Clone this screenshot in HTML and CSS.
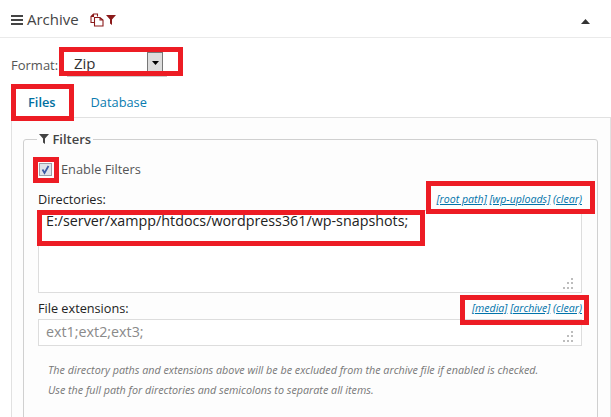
FILE: index.html
```html
<!DOCTYPE html>
<html lang="en">
<head>
<meta charset="utf-8">
<title>Archive</title>
<link rel="stylesheet" href="styles.css">
</head>
<body>
<div class="page">
  <header class="head">
    <svg class="burger" viewBox="0 0 12 10" width="12" height="10"><path d="M0 0h12v2H0zM0 4h12v2H0zM0 8h12v2H0z" fill="#444"/></svg>
    <span class="head-title">Archive</span>
    <svg class="copy-icon" viewBox="0 0 14 14" width="14" height="14"><path d="M5.500 1H3.500L1 3.500V9.500H4.500M5.500 1H7.500V3.500M3.500 1V3.500H1M4.500 4.500H10L13 7V13H4.500ZM10 4.500V7H13" fill="none" stroke="#8b1a1a" stroke-width="1.100"/></svg>
    <svg class="funnel-red" viewBox="0 0 10 10" width="10" height="10"><path d="M0 0h10L6 4.500V10L4 8.500V4.500z" fill="#8b1a1a"/></svg>
    <svg class="caret" viewBox="0 0 9 5" width="9" height="5"><path d="M4.500 0L9 5H0z" fill="#333"/></svg>
  </header>

  <div class="format-row">
    <label class="format-label">Format:</label>
    <div class="select">
      <span class="select-value">Zip</span>
      <span class="select-btn"><svg viewBox="0 0 7 4" width="7" height="4"><path d="M0 0h7L3.500 4z" fill="#000"/></svg></span>
    </div>
  </div>

  <nav class="tabs">
    <a class="tab tab-active">Files</a>
    <a class="tab">Database</a>
  </nav>

  <section class="panel">
    <fieldset class="filters">
      <legend class="legend">
        <svg viewBox="0 0 10 10" width="10" height="10"><path d="M0 0h10L6 4.500V10L4 8.500V4.500z" fill="#444"/></svg>
        Filters
      </legend>
      <div class="enable-row">
        <span class="checkbox"><svg viewBox="0 0 13 13" width="13" height="13"><path d="M3.500 6.500L5.500 10L9.500 3" fill="none" stroke="#3b5aa5" stroke-width="1.700"/></svg></span>
        <span class="enable-label">Enable Filters</span>
      </div>
      <div class="label-row label-row-dirs">
        <span class="field-label">Directories:</span>
        <span class="links"><a>[root path]</a> <a>[wp-uploads]</a> <a>(clear)</a></span>
      </div>
      <div class="field field-dirs">
        E:/server/xampp/htdocs/wordpress361/wp-snapshots;
        <svg class="grip" viewBox="0 0 12 12" width="12" height="12"><path d="M9 0h2v2H9zM5 4h2v2H5zM9 4h2v2H9zM1 9h2v2H1zM5 9h2v2H5zM9 9h2v2H9z" fill="#bdbdbd"/></svg>
      </div>
      <div class="label-row label-row-ext">
        <span class="field-label">File extensions:</span>
        <span class="links"><a>[media]</a> <a>[archive]</a> <a>(clear)</a></span>
      </div>
      <div class="field field-ext">
        ext1;ext2;ext3;
        <svg class="grip" viewBox="0 0 12 12" width="12" height="12"><path d="M9 0h2v2H9zM5 4h2v2H5zM9 4h2v2H9zM1 9h2v2H1zM5 9h2v2H5zM9 9h2v2H9z" fill="#bdbdbd"/></svg>
      </div>
      <div class="notes">
        <p>The directory paths and extensions above will be be excluded from the archive file if enabled is checked.</p>
        <p>Use the full path for directories and semicolons to separate all items.</p>
      </div>
    </fieldset>
  </section>

  <div class="mark mark-format"></div>
  <div class="mark mark-files"></div>
  <div class="mark mark-check"></div>
  <div class="mark mark-dirs"></div>
  <div class="mark mark-links"></div>
  <div class="mark mark-extlinks"></div>
</div>
</body>
</html>
```
FILE: styles.css
```css
* { box-sizing: border-box; }
html, body { margin: 0; padding: 0; background: #fff; }
body { font-family: "Open Sans", sans-serif; color: #444; overflow: hidden; }
.page { position: relative; width: 611px; height: 417px; overflow: hidden; }

.head { display: flex; align-items: center; height: 38px; padding: 0 21px 0 11px; border-bottom: 1px solid #eaeaea; }
.burger { margin-top: 3px; }
.head-title { font-size: 15px; margin-left: 4px; color: #444; line-height: 38px; }
.copy-icon { margin-left: 11px; margin-top: 3px; }
.funnel-red { margin-left: 2px; margin-top: 3px; }
.caret { margin-left: auto; margin-top: 5px; }

.format-row { display: flex; align-items: flex-start; height: 46px; padding: 14px 0 0 11px; }
.format-label { font-size: 13px; line-height: 24px; margin-top: 1px; width: 56px; color: #555; }
.select { display: flex; align-items: flex-start; width: 100px; height: 25px; border-bottom: 1px solid #ccc; padding-left: 7px; background: #fff; }
.select-value { font-size: 15px; line-height: 22px; width: 73px; color: #333; }
.select-btn { display: flex; align-items: center; justify-content: center; width: 16px; height: 20px; background: #ddd; border: 1px solid #777; border-bottom: 0; }

.tabs { display: flex; height: 33px; padding-left: 17px; }
.tab { font-size: 12.800px; line-height: 36px; color: #0a7cb0; margin-right: 35px; }
.tab-active { font-weight: 600; color: #006f9f; padding-left: 11px; margin-right: 35px; }

.panel { height: 300px; margin-left: 11px; border: 1px solid #e1e1e1; border-bottom: 0; background: #fdfdfd; padding: 12px 12px 0 11px; }
.filters { margin: 0; padding: 0 15px 0 14px; height: 290px; border: 1px solid #d0d0d0; border-radius: 3px; display: block; }
.legend { font-size: 13px; font-weight: 600; color: #444; padding: 0 2px; margin-left: -1px; line-height: 18px; }
.legend svg { margin-right: 0; }

.enable-row { display: flex; align-items: center; height: 22px; margin-top: 10px; }
.checkbox { display: block; width: 13px; height: 13px; margin-left: 1px; background: #dfe3ea; border: 1px solid #9a9fa8; }
.checkbox svg { display: block; margin: -1px; }
.enable-label { font-size: 12.800px; margin-left: 9px; color: #555; line-height: 22px; }

.label-row { display: flex; align-items: flex-end; justify-content: space-between; padding-bottom: 2px; }
.label-row-dirs { height: 22px; margin-top: 8px; }
.label-row-ext { height: 26px; }
.field-label { font-size: 12.700px; color: #222; line-height: 18px; }
.links { font-size: 10.600px; font-style: italic; color: #0073aa; line-height: 18px; }
.links a { text-decoration: underline; }

.field { position: relative; border: 1px solid #ddd; background: #fff; padding-left: 7px; }
.field-dirs { height: 83px; font-size: 14.300px; line-height: 20px; color: #222; }
.field-ext { height: 27px; font-size: 14.300px; line-height: 24px; color: #8a8a8a; }
.grip { position: absolute; right: 7px; bottom: 2px; }

.notes { margin: 14px 0 0 10px; }
.notes p { margin: 0; font-size: 10.750px; line-height: 20px; font-style: italic; color: #777; white-space: nowrap; }

.mark { position: absolute; border: 5px solid #ed1c24; }
.mark-format { left: 59px; top: 47px; width: 124px; height: 29px; }
.mark-files { left: 11px; top: 84px; width: 63px; height: 37px; }
.mark-check { left: 33px; top: 157px; width: 26px; height: 26px; }
.mark-dirs { left: 37px; top: 210px; width: 388px; height: 36px; }
.mark-links { left: 426px; top: 181px; width: 169px; height: 33px; }
.mark-extlinks { left: 460px; top: 295px; width: 129px; height: 30px; }
```
